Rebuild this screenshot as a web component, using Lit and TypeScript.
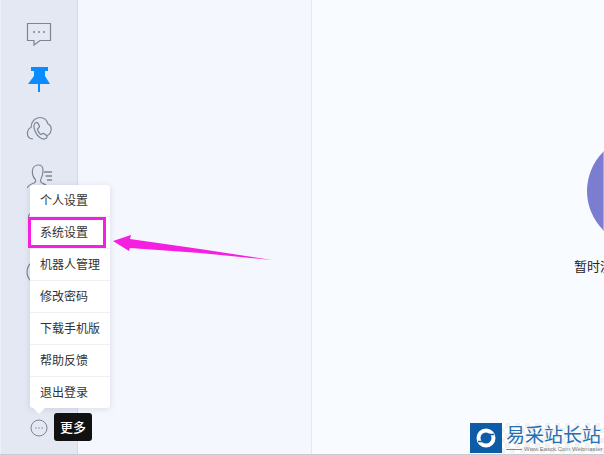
import { LitElement, html, css } from "lit";
import { customElement } from "lit/decorators.js";

const MENU = ["个人设置", "系统设置", "机器人管理", "修改密码", "下载手机版", "帮助反馈", "退出登录"];

@customElement("app-root")
export class AppRoot extends LitElement {
  static styles = css`
    :host { display: block; width: 604px; height: 455px; position: relative; overflow: hidden;
      font-family: "Noto Sans CJK SC", "Liberation Sans", sans-serif; background: #f8fbff; }
    .app { display: flex; height: 455px; }
    .side { flex: none; background: #e3e8f3; border-right: 1px solid #d5d9e4; border-left: 1px solid #eef0f6;
      box-sizing: border-box; width: 78px; display: flex; flex-direction: column; align-items: center; padding: 21px 1px 0 0; gap: 22px; }
    .side svg { display: block; flex: none; }
    .side .pin { margin-top: -3px; }
    .list { width: 233px; flex: none; background: #f5f7fe; border-right: 1px solid #e6e9f2; }
    .main { flex: 1; min-width: 0; overflow: hidden; padding: 136px 0 0 262px; }
    .empty { width: 136px; display: flex; flex-direction: column; align-items: center; }
    .disc { width: 110px; height: 110px; border-radius: 50%; background: #7b7ed0; flex: none; overflow: hidden; }
    .disc::after { content: ""; display: block; margin-left: 16px; width: 3px; height: 110px; background: #d3ac74; }
    .empty-text { margin-top: 11px; font-size: 13px; line-height: 18px; color: #222; white-space: nowrap; align-self: flex-start; }
    .edge { position: absolute; left: 0; right: 0; bottom: 0; height: 1px; background: #c9cbd0; }
    .menu { position: absolute; left: 30px; top: 185px; width: 80px; background: #fff; border-radius: 3px;
      box-shadow: 0 1px 6px rgba(90,100,130,.18); }
    .menu::after { content: ""; position: absolute; left: 3px; bottom: -6px; border: 6px solid transparent; border-bottom: 0; border-top-color: #fff; }
    .item { height: 28px; padding-bottom: 3px; display: flex; align-items: center; padding-left: 10px; font-size: 12px; color: #333; border-bottom: 1px solid #eef0f4; white-space: nowrap; }
    .item:last-child { border-bottom: 0; }
    .hl { position: absolute; left: 28px; top: 217px; width: 78px; height: 31px; border: 3px solid #f51fe0; box-sizing: border-box; }
    .arrow { position: absolute; left: 110px; top: 230px; }
    .more { position: absolute; left: 30px; top: 419px; }
    .tip { position: absolute; left: 54px; top: 413px; width: 38px; height: 26px; padding-bottom: 2px; background: #111; color: #fff; border-radius: 3px;
      font-size: 13px; font-weight: 500; display: flex; align-items: center; justify-content: center; }
    .logo { position: absolute; left: 470px; top: 423px; width: 134px; height: 30px; display: flex;
      background: repeating-conic-gradient(#f1f1f1 0 25%, #fff 0 50%) 0 0 / 10px 10px; }
    .mark { width: 32px; height: 30px; background: #0e5ba6; display: flex; align-items: center; justify-content: center; flex: none; }
    .brand { padding-left: 4px; color: #2470b4; overflow: hidden; }
    .cn { font-size: 19px; line-height: 22px; white-space: nowrap; display: block; }
    .en { font-size: 6px; line-height: 8px; color: #777; white-space: nowrap; display: flex; align-items: center; gap: 2px; font-family: "Liberation Sans", sans-serif; }
    .en::before { content: ""; width: 16px; height: 1px; background: #888; flex: none; }
  `;
  render() {
    return html`
      <div class="app">
        <nav class="side">
          <svg width="26" height="26" viewBox="0 0 26 26" fill="none" stroke="#7d8596" stroke-width="1.200">
            <path d="M1.500 2.500h23v17H14l-6 4.500v-4.500H1.500z"/>
            <path d="M7 11h2M12 11h2M17 11h2" stroke-width="1.500"/>
          </svg>
          <svg class="pin" width="26" height="27" viewBox="0 0 26 27">
            <path d="M5 1h17v4h-3v5l5 8H14v8h-2v-8H2l6-8V5H5z" fill="#0a8cff"/>
          </svg>
          <svg width="26" height="26" viewBox="0 0 26 26" fill="none" stroke="#7d8596" stroke-width="1.200">
            <path d="M7 24C3 24 1 21 1.500 17.500 1.800 15 3.500 13 5 12.500 5 7 9 2.500 14 2.500c4 0 7 3 8 6.500 2.500 1 3.500 3.500 3 6.500-.5 2.500-2 4.500-4 5"/>
            <path d="M10 7.500C7.500 8.500 7.500 12 9 16c2 5 6 8.500 9.500 8 2-.5 3-2 2.500-3l-3-2.500c-1-.5-2 .5-3 1-1.500-.5-3.500-4-3.500-5.500 1-1 2-1.500 2-2.500-.5-1.500-1.500-4.500-3.500-4z"/>
          </svg>
          <svg width="26" height="26" viewBox="0 0 26 26" fill="none" stroke="#7d8596" stroke-width="1.200">
            <path d="M1.500 25C2 22 5 21 8 20c2-1 2-2.500 1-4-2-2-3-5-2.500-9C7 4 9.500 2 12 2c3 0 5 2 5 5 0 4-1 7-2 9-1 1.500-.5 3 1 4 2 1 5 2 6 5"/>
            <path d="M18 9h8M19.500 13h6.500M21 17h5" stroke-width="1.600"/>
          </svg>
          <svg width="26" height="26" viewBox="0 0 26 26" fill="none" stroke="#7d8596" stroke-width="1.200">
            <rect x="2.500" y="2.500" width="21" height="21" rx="3"/>
          </svg>
          <svg width="26" height="26" viewBox="0 0 26 26" fill="none" stroke="#7d8596" stroke-width="1.200">
            <circle cx="13" cy="13" r="12"/>
          </svg>
        </nav>
        <div class="list"></div>
        <main class="main">
          <div class="empty">
            <div class="disc"></div>
            <div class="empty-text">暂时没有任何会话消息</div>
          </div>
        </main>
      </div>
      <div class="edge"></div>
      <div class="menu">${MENU.map((m) => html`<div class="item">${m}</div>`)}</div>
      <div class="hl"></div>
      <svg class="arrow" width="164" height="32" viewBox="0 0 164 32">
        <path d="M3 11L21 5l-1 4 70 10 72 11-72-7-70-5-1 3z" fill="#f51fe0"/>
      </svg>
      <svg class="more" width="18" height="18" viewBox="0 0 18 18" fill="none" stroke="#7d8596" stroke-width="1">
        <circle cx="9" cy="9" r="8"/>
        <path d="M5 9h1.500M8.200 9h1.500M11.500 9h1.500"/>
      </svg>
      <div class="tip">更多</div>
      <div class="logo">
        <div class="mark">
          <svg width="24" height="24" viewBox="0 0 24 24" fill="none" stroke="#fff">
            <circle cx="12" cy="12" r="7.500" stroke-width="4"/>
            <path d="M7 12h10" stroke="#0e5ba6" stroke-width="2"/>
            <path d="M15 8.500h5M4 15.500h5" stroke="#0e5ba6" stroke-width="1.500"/>
          </svg>
        </div>
        <div class="brand"><span class="cn">易采站长站</span><span class="en">Www.Easck.Com Webmaster</span></div>
      </div>
    `;
  }
}
